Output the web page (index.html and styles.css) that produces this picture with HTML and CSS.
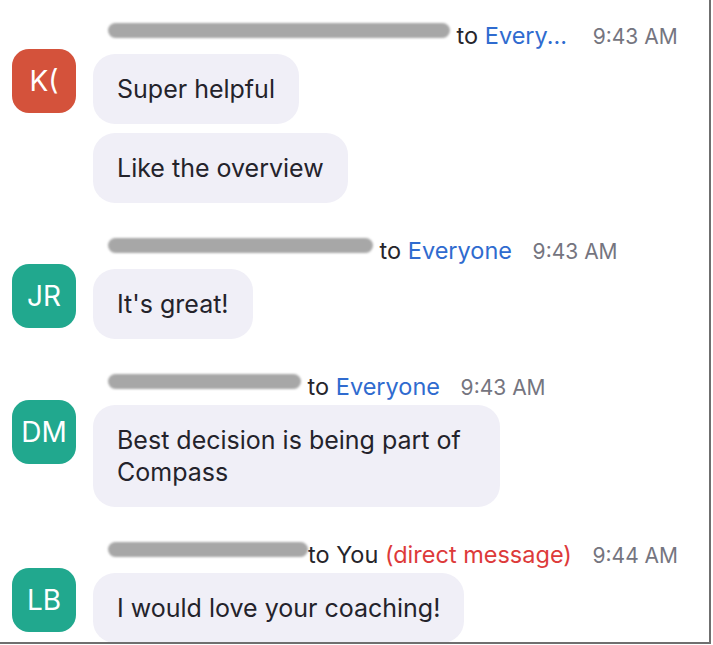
FILE: index.html
```html
<!DOCTYPE html>
<html lang="en">
<head>
<meta charset="UTF-8">
<title>Chat</title>
<link rel="stylesheet" href="styles.css">
</head>
<body>

<div class="frame">

    <!-- Message 1 -->
    <div class="msg">
        <div class="meta">
            <span class="redact r1"></span> to <span class="to">Every...</span>
            <span class="time far">9:43 AM</span>
        </div>
        <div class="row">
            <div class="avatar red">K(</div>
            <div class="bubbles">
                <div class="bubble">Super helpful</div>
                <div class="bubble">Like the overview</div>
            </div>
        </div>
    </div>

    <!-- Message 2 -->
    <div class="msg">
        <div class="meta">
            <span class="redact r2"></span> to <span class="to">Everyone</span>
            <span class="time">9:43 AM</span>
        </div>
        <div class="row">
            <div class="avatar teal">JR</div>
            <div class="bubbles">
                <div class="bubble">It's great!</div>
            </div>
        </div>
    </div>

    <!-- Message 3 -->
    <div class="msg">
        <div class="meta">
            <span class="redact r3"></span> to <span class="to">Everyone</span>
            <span class="time">9:43 AM</span>
        </div>
        <div class="row">
            <div class="avatar teal">DM</div>
            <div class="bubbles">
                <div class="bubble wrap">Best decision is being part of Compass</div>
            </div>
        </div>
    </div>

    <!-- Message 4 -->
    <div class="msg">
        <div class="meta">
            <span class="redact r4"></span>to You <span class="dm">(direct message)</span>
            <span class="time">9:44 AM</span>
        </div>
        <div class="row">
            <div class="avatar teal">LB</div>
            <div class="bubbles">
                <div class="bubble">I would love your coaching!</div>
            </div>
        </div>
    </div>

</div>

</body>
</html>
```

FILE: styles.css
```css
* {
    box-sizing: border-box;
    margin: 0;
    padding: 0;
}

body {
    background-color: #fff;
    font-family: Inter, "Noto Sans", sans-serif;
    color: #24232b;
}

.frame {
    width: 711px;
    height: 644px;
    overflow: hidden;
    padding-top: 23px;
    border-right: 2px solid #6f6f6f;
    border-bottom: 2px solid #6f6f6f;
}

.msg {
    margin-bottom: 35px;
}

.meta {
    padding-left: 108px;
    height: 26px;
    line-height: 26px;
    font-size: 23.5px;
    color: #26252b;
    white-space: nowrap;
}

.redact {
    display: inline-block;
    height: 15px;
    vertical-align: 6px;
    background-color: #a7a7a7;
    border-radius: 8px;
    filter: blur(1px);
}

.r1 { width: 342px; }
.r2 { width: 265px; }
.r3 { width: 193px; }
.r4 { width: 200px; }

.to {
    color: #2f6bcf;
}

.dm {
    color: #dd3a3a;
}

.time {
    margin-left: 14px;
    font-size: 21px;
    color: #757580;
}

.time.far {
    margin-left: 19px;
}

.row {
    display: flex;
    align-items: flex-start;
    gap: 17px;
    padding-left: 12px;
}

.avatar {
    flex: none;
    width: 64px;
    height: 64px;
    border-radius: 17px;
    display: flex;
    align-items: center;
    justify-content: center;
    color: #fff;
    font-size: 28px;
}

.avatar.red {
    background-color: #d4523b;
}

.avatar.teal {
    background-color: #21a88e;
}

.bubbles {
    display: flex;
    flex-direction: column;
    align-items: flex-start;
    gap: 9px;
    margin-top: 5px;
}

.bubble {
    background-color: #f0eff7;
    border-radius: 22px;
    padding: 19px 24px;
    font-size: 25px;
    line-height: 32px;
}

.bubble.wrap {
    width: 407px;
}
```
